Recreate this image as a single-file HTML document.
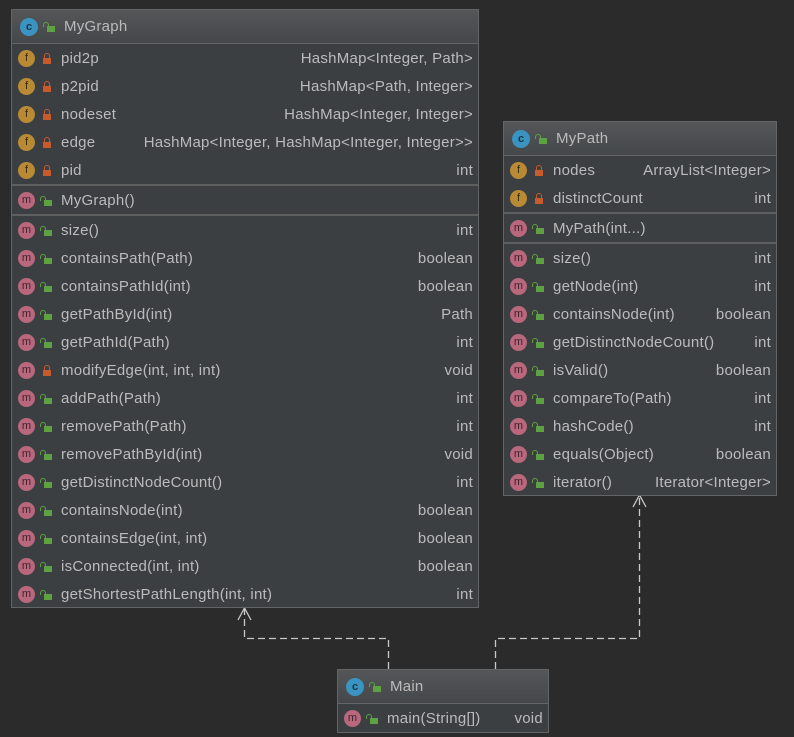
<!DOCTYPE html>
<html><head><meta charset="utf-8"><style>
*{margin:0;padding:0;box-sizing:border-box}
body{width:794px;height:737px;background:#2b2b2b;position:relative;overflow:hidden;font-family:"Liberation Sans","DejaVu Sans",sans-serif;font-size:15px;letter-spacing:0.25px;color:#bbbbbb}
.box{position:absolute;background:#3c3f41;border:1px solid #626466}
.hd{height:34px;background:linear-gradient(#545658,#45484a);display:flex;align-items:center;padding-left:8px;border-bottom:1px solid #626466;font-size:15px}
.sec{border-top:2px solid #5e6060}
.hd + .sec{border-top:none}
.r{height:28px;display:flex;align-items:center;padding-left:6px;padding-right:5px;white-space:nowrap}
.r .n{flex:1}
.i{width:17px;height:17px;border-radius:50%;display:inline-flex;align-items:center;justify-content:center;font-size:11px;color:#3a2a10;margin-right:7px;flex:none;letter-spacing:0}
.hd .i{width:18px;height:18px}
.f{background:#b88a35}
.m{background:#b8677d;color:#3d2230}
.c{background:#3a93c0;color:#173646;font-weight:bold}
.lk{width:9px;height:11px;margin-right:10px;flex:none;position:relative}
.lk:before{content:"";position:absolute;left:1px;bottom:0;width:8px;height:6px}
.lk:after{content:"";position:absolute;left:2px;top:0;width:4px;height:4px;border:1.5px solid;border-bottom:none;border-radius:3px 3px 0 0}
.p:before{background:#c75b2c}.p:after{border-color:#c75b2c}
.o:before{background:#5ea142;left:2px}.o:after{border-color:#5ea142;left:-2px;top:1px}
</style></head><body>
<svg width="794" height="737" style="position:absolute;left:0;top:0">
<g stroke="#c8c8c8" stroke-width="1.3" fill="none" stroke-dasharray="7,4">
<path d="M388.5 669 V638.5 H244.5 V609"/>
<path d="M495.5 669 V638.5 H639.5 V496"/>
</g>
<g stroke="#c8c8c8" stroke-width="1.3" fill="none">
<path d="M238 620 L244.5 608 L251 620"/>
<path d="M633 507 L639.5 495 L646 507"/>
</g>
</svg>

<div class="box" style="left:11px;top:9px;width:468px;height:599px">
<div class="hd"><span class="i c">c</span><span class="lk o"></span>MyGraph</div>
<div class="sec">
<div class="r"><span class="i f">f</span><span class="lk p"></span><span class="n">pid2p</span>HashMap&lt;Integer, Path&gt;</div>
<div class="r"><span class="i f">f</span><span class="lk p"></span><span class="n">p2pid</span>HashMap&lt;Path, Integer&gt;</div>
<div class="r"><span class="i f">f</span><span class="lk p"></span><span class="n">nodeset</span>HashMap&lt;Integer, Integer&gt;</div>
<div class="r"><span class="i f">f</span><span class="lk p"></span><span class="n">edge</span>HashMap&lt;Integer, HashMap&lt;Integer, Integer&gt;&gt;</div>
<div class="r"><span class="i f">f</span><span class="lk p"></span><span class="n">pid</span>int</div>
</div>
<div class="sec">
<div class="r"><span class="i m">m</span><span class="lk o"></span><span class="n">MyGraph()</span></div>
</div>
<div class="sec">
<div class="r"><span class="i m">m</span><span class="lk o"></span><span class="n">size()</span>int</div>
<div class="r"><span class="i m">m</span><span class="lk o"></span><span class="n">containsPath(Path)</span>boolean</div>
<div class="r"><span class="i m">m</span><span class="lk o"></span><span class="n">containsPathId(int)</span>boolean</div>
<div class="r"><span class="i m">m</span><span class="lk o"></span><span class="n">getPathById(int)</span>Path</div>
<div class="r"><span class="i m">m</span><span class="lk o"></span><span class="n">getPathId(Path)</span>int</div>
<div class="r"><span class="i m">m</span><span class="lk p"></span><span class="n">modifyEdge(int, int, int)</span>void</div>
<div class="r"><span class="i m">m</span><span class="lk o"></span><span class="n">addPath(Path)</span>int</div>
<div class="r"><span class="i m">m</span><span class="lk o"></span><span class="n">removePath(Path)</span>int</div>
<div class="r"><span class="i m">m</span><span class="lk o"></span><span class="n">removePathById(int)</span>void</div>
<div class="r"><span class="i m">m</span><span class="lk o"></span><span class="n">getDistinctNodeCount()</span>int</div>
<div class="r"><span class="i m">m</span><span class="lk o"></span><span class="n">containsNode(int)</span>boolean</div>
<div class="r"><span class="i m">m</span><span class="lk o"></span><span class="n">containsEdge(int, int)</span>boolean</div>
<div class="r"><span class="i m">m</span><span class="lk o"></span><span class="n">isConnected(int, int)</span>boolean</div>
<div class="r"><span class="i m">m</span><span class="lk o"></span><span class="n">getShortestPathLength(int, int)</span>int</div>
</div>
</div>

<div class="box" style="left:503px;top:121px;width:274px;height:375px">
<div class="hd"><span class="i c">c</span><span class="lk o"></span>MyPath</div>
<div class="sec">
<div class="r"><span class="i f">f</span><span class="lk p"></span><span class="n">nodes</span>ArrayList&lt;Integer&gt;</div>
<div class="r"><span class="i f">f</span><span class="lk p"></span><span class="n">distinctCount</span>int</div>
</div>
<div class="sec">
<div class="r"><span class="i m">m</span><span class="lk o"></span><span class="n">MyPath(int...)</span></div>
</div>
<div class="sec">
<div class="r"><span class="i m">m</span><span class="lk o"></span><span class="n">size()</span>int</div>
<div class="r"><span class="i m">m</span><span class="lk o"></span><span class="n">getNode(int)</span>int</div>
<div class="r"><span class="i m">m</span><span class="lk o"></span><span class="n">containsNode(int)</span>boolean</div>
<div class="r"><span class="i m">m</span><span class="lk o"></span><span class="n">getDistinctNodeCount()</span>int</div>
<div class="r"><span class="i m">m</span><span class="lk o"></span><span class="n">isValid()</span>boolean</div>
<div class="r"><span class="i m">m</span><span class="lk o"></span><span class="n">compareTo(Path)</span>int</div>
<div class="r"><span class="i m">m</span><span class="lk o"></span><span class="n">hashCode()</span>int</div>
<div class="r"><span class="i m">m</span><span class="lk o"></span><span class="n">equals(Object)</span>boolean</div>
<div class="r"><span class="i m">m</span><span class="lk o"></span><span class="n">iterator()</span>Iterator&lt;Integer&gt;</div>
</div>
</div>

<div class="box" style="left:337px;top:669px;width:212px;height:64px">
<div class="hd"><span class="i c">c</span><span class="lk o"></span>Main</div>
<div class="sec">
<div class="r"><span class="i m">m</span><span class="lk o"></span><span class="n">main(String[])</span>void</div>
</div>
</div>
</body></html>
